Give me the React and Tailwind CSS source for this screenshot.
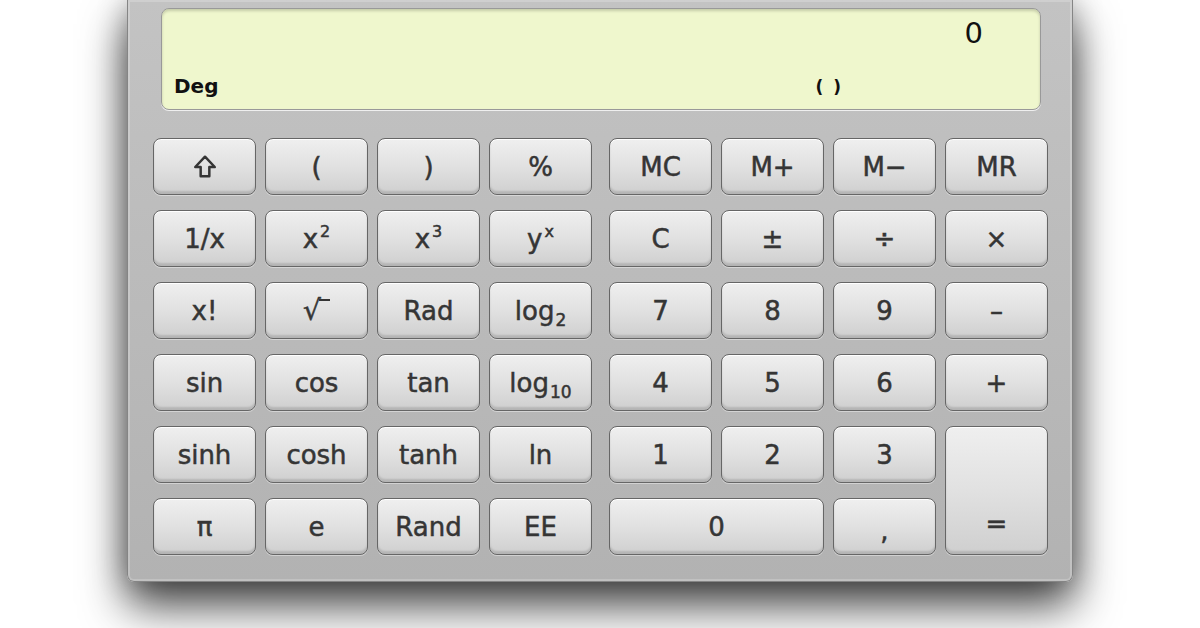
import React from 'react';

const font = { fontFamily: '"DejaVu Sans", "Liberation Sans", sans-serif' };

function Key({ children, className = '' }) {
    return (
        <div
            className={`flex items-center justify-center rounded-[8px] border border-[#666] bg-linear-to-b from-[#efefef] via-[#e1e1e1] to-[#cfcfcf] text-[26px] leading-none text-[#353535] [-webkit-text-stroke:0.5px_#353535] shadow-[inset_0_1px_0_#ffffff,inset_0_-3px_2px_rgba(0,0,0,0.13),0_1px_0_rgba(255,255,255,0.4)] ${className}`}
        >
            {children}
        </div>
    );
}

const Sup = ({ children }) => <sup className="text-[16px] -top-[11px] ml-[2px]">{children}</sup>;
const Sub = ({ children }) => <sub className="text-[17px] -bottom-[6px] ml-[1px]">{children}</sub>;

// shift key glyph, outlined arrow
const ShiftIcon = () => (
    <svg width="26" height="26" viewBox="0 0 24 24" fill="none" stroke="#353535" strokeWidth="2.3" strokeLinejoin="round">
        <path d="M12 2.5 L21 12 H16 V20.5 H8 V12 H3 Z" />
    </svg>
);

export default function App() {
    // left block: scientific functions
    const sci = [
        <ShiftIcon />, '(', ')', '%',
        '1/x', <span>x<Sup>2</Sup></span>, <span>x<Sup>3</Sup></span>, <span>y<Sup>x</Sup></span>,
        'x!',
        <span className="flex items-start">
            <span className="text-[28px]">√</span>
            <span className="mt-[2px] -ml-[2px] inline-block h-0 w-[11px] border-t-[2px] border-[#353535]"></span>
        </span>,
        'Rad', <span>log<Sub>2</Sub></span>,
        'sin', 'cos', 'tan', <span>log<Sub>10</Sub></span>,
        'sinh', 'cosh', 'tanh', 'ln',
        'π', 'e', 'Rand', 'EE',
    ];

    return (
        <div className="h-[628px] w-[1200px] overflow-hidden bg-white" style={font}>
            <div className="ml-[127px] h-[582px] w-[946px] rounded-b-[7px] border border-t-0 border-[#858585] bg-linear-to-b from-[#c3c3c3] to-[#b2b2b2] px-[25px] pt-[8px] shadow-[0_24px_45px_rgba(0,0,0,0.72),0_0_30px_rgba(0,0,0,0.3),inset_0_0_0_2px_rgba(255,255,255,0.2)]">
                {/* display */}
                <div className="ml-[8px] mr-[6px] flex h-[102px] flex-col justify-between rounded-[8px] border border-[#999] bg-[#eff7cd] shadow-[inset_0_2px_3px_rgba(0,0,0,0.18),0_1px_0_rgba(255,255,255,0.75)]">
                    <div className="flex justify-end pr-[57px] pt-[10px] text-[29px] leading-none text-[#111]">0</div>
                    <div className="flex items-end pb-[13px] pl-[12px] leading-none text-[#111]">
                        <span className="text-[20px] font-bold">Deg</span>
                        <span className="ml-auto mr-[197px] text-[17px] font-bold tracking-[2px]">( )</span>
                    </div>
                </div>

                {/* keys */}
                <div className="mt-[28px] flex gap-[17px]">
                    <div className="grid grid-cols-[repeat(4,103px)] grid-rows-[repeat(6,57px)] gap-x-[9px] gap-y-[15px]">
                        {sci.map((k, i) => (
                            <Key key={i}>{k}</Key>
                        ))}
                    </div>
                    <div className="grid grid-cols-[repeat(4,103px)] grid-rows-[repeat(6,57px)] gap-x-[9px] gap-y-[15px]">
                        {['MC', 'M+', 'M−', 'MR', 'C', '±', '÷', '×', '7', '8', '9', '–', '4', '5', '6', '+'].map((k) => (
                            <Key key={k}>{k}</Key>
                        ))}
                        <Key>1</Key>
                        <Key>2</Key>
                        <Key>3</Key>
                        <Key className="row-span-2 items-end pb-[17px]">=</Key>
                        <Key className="col-span-2">0</Key>
                        <Key><span className="mt-[8px]">,</span></Key>
                    </div>
                </div>
            </div>
        </div>
    );
}
